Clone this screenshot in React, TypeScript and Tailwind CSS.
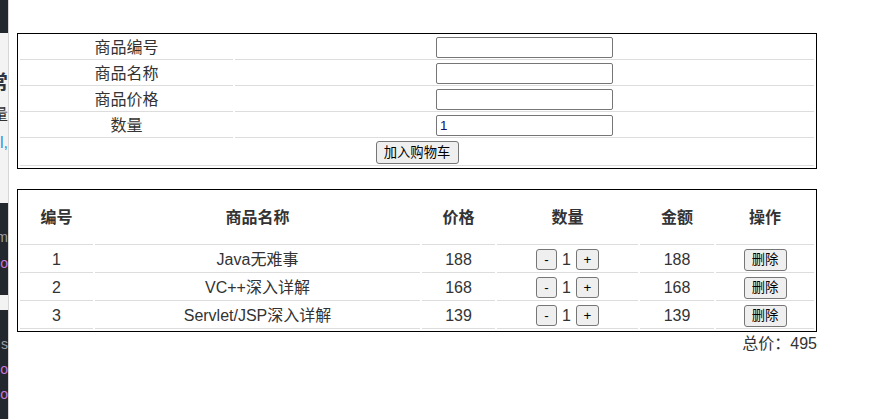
import React from 'react';

const FONT = 'font-["Liberation_Sans","Noto_Sans_CJK_SC",sans-serif]';

const goods = [
  { id: 1, name: 'Java无难事', price: 188, qty: 1 },
  { id: 2, name: 'VC++深入详解', price: 168, qty: 1 },
  { id: 3, name: 'Servlet/JSP深入详解', price: 139, qty: 1 },
];

/** 左侧被遮挡的窗口边缘 */
function SideStrip() {
  return (
    <div className="w-[9px] h-[419px] flex flex-col shrink-0 border-r border-[#d6d6d6] overflow-hidden">
      <div className="h-[33px] bg-[#23272e]" />
      <div className="h-[170px] bg-[#f3f3f3] flex flex-col">
        <div className="h-[38px]" />
        <div className="flex justify-end overflow-hidden whitespace-nowrap text-[20px] font-bold text-[#2b3440] leading-[24px]">
          异常
        </div>
        <div className="h-[10px]" />
        <div className="flex justify-end overflow-hidden whitespace-nowrap text-[16px] text-[#333] leading-[20px]">
          数量
        </div>
        <div className="h-[8px]" />
        <div className="flex justify-end overflow-hidden whitespace-nowrap text-[16px] text-[#3a8ee6] leading-[20px]">
          值l,
        </div>
      </div>
      <div className="h-[92px] bg-[#23272e] flex flex-col">
        <div className="h-[24px]" />
        <div className="flex justify-end overflow-hidden whitespace-nowrap text-[14px] text-[#9aa0a8] leading-[20px]">
          m
        </div>
        <div className="h-[6px]" />
        <div className="flex justify-end overflow-hidden whitespace-nowrap text-[14px] text-[#c678dd] leading-[20px]">
          o
        </div>
      </div>
      <div className="h-[15px] bg-[#f3f3f3]" />
      <div className="flex-1 bg-[#23272e] flex flex-col">
        <div className="h-[24px]" />
        <div className="flex justify-end overflow-hidden whitespace-nowrap text-[14px] text-[#9aa0a8] leading-[20px]">
          s
        </div>
        <div className="h-[5px]" />
        <div className="flex justify-end overflow-hidden whitespace-nowrap text-[14px] text-[#c678dd] leading-[20px]">
          o
        </div>
        <div className="h-[5px]" />
        <div className="flex justify-end overflow-hidden whitespace-nowrap text-[14px] text-[#c678dd] leading-[20px]">
          o
        </div>
      </div>
    </div>
  );
}

function Btn({ children, className = '' }: { children: React.ReactNode; className?: string }) {
  return (
    <button
      className={`bg-[#efefef] border border-[#767676] rounded-[3px] text-[13.33px] leading-none text-black flex items-center justify-center ${className}`}
    >
      {children}
    </button>
  );
}

export default function App() {
  const total = goods.reduce((s, g) => s + g.price * g.qty, 0);
  const labels = ['商品编号', '商品名称', '商品价格', '数量'];

  return (
    <div className={`flex w-[872px] h-[419px] bg-white text-[#333] ${FONT}`}>
      <SideStrip />
      <div className="pl-[8px] pt-[33px]">
        {/* 商品录入表单 */}
        <table className="w-[800px] table-fixed border border-black border-separate border-spacing-[2px] text-[16px]">
          <colgroup>
            <col className="w-[213px]" />
            <col />
          </colgroup>
          <tbody>
            {labels.map((l, i) => (
              <tr key={l}>
                <td className="h-[24px] p-0 text-center align-middle border-b border-[#ddd] leading-[20px]">{l}</td>
                <td className="h-[24px] p-0 border-b border-[#ddd]">
                  <div className="flex justify-center">
                    <input
                      readOnly
                      value={i === 3 ? '1' : ''}
                      className="w-[177px] h-[21px] border border-[#767676] rounded-[2px] px-[3px] text-[13.33px] text-[#10106a] outline-none"
                    />
                  </div>
                </td>
              </tr>
            ))}
            <tr>
              <td colSpan={2} className="h-[26px] p-0 border-b border-[#ddd]">
                <div className="flex justify-center">
                  <Btn className="w-[83px] h-[23px]">加入购物车</Btn>
                </div>
              </td>
            </tr>
          </tbody>
        </table>

        {/* 购物车 */}
        <table className="mt-[20px] w-[800px] table-fixed border border-black border-separate border-spacing-[2px] text-[16px]">
          <colgroup>
            <col className="w-[73px]" />
            <col className="w-[325px]" />
            <col className="w-[73px]" />
            <col className="w-[141px]" />
            <col className="w-[74px]" />
            <col className="w-[98px]" />
          </colgroup>
          <thead>
            <tr>
              {['编号', '商品名称', '价格', '数量', '金额', '操作'].map((h) => (
                <th key={h} className="h-[53px] p-0 text-center align-middle font-bold border-b border-[#ddd]">
                  {h}
                </th>
              ))}
            </tr>
          </thead>
          <tbody>
            {goods.map((g) => (
              <tr key={g.id}>
                <td className="h-[26px] p-0 text-center border-b border-[#ddd] leading-[20px]">{g.id}</td>
                <td className="h-[26px] p-0 text-center border-b border-[#ddd] leading-[20px]">{g.name}</td>
                <td className="h-[26px] p-0 text-center border-b border-[#ddd] leading-[20px]">{g.price}</td>
                <td className="h-[26px] p-0 border-b border-[#ddd]">
                  <div className="flex items-center justify-center gap-[5px] leading-[20px]">
                    <Btn className="w-[21px] h-[21px]">-</Btn>
                    <span>{g.qty}</span>
                    <Btn className="w-[23px] h-[21px]">+</Btn>
                  </div>
                </td>
                <td className="h-[26px] p-0 text-center border-b border-[#ddd] leading-[20px]">{g.price * g.qty}</td>
                <td className="h-[26px] p-0 border-b border-[#ddd]">
                  <div className="flex justify-center">
                    <Btn className="w-[43px] h-[22px]">删除</Btn>
                  </div>
                </td>
              </tr>
            ))}
          </tbody>
        </table>
        <div className="w-[800px] text-right text-[16px] leading-[22px] mt-[1px]">总价：{total}</div>
      </div>
    </div>
  );
}
